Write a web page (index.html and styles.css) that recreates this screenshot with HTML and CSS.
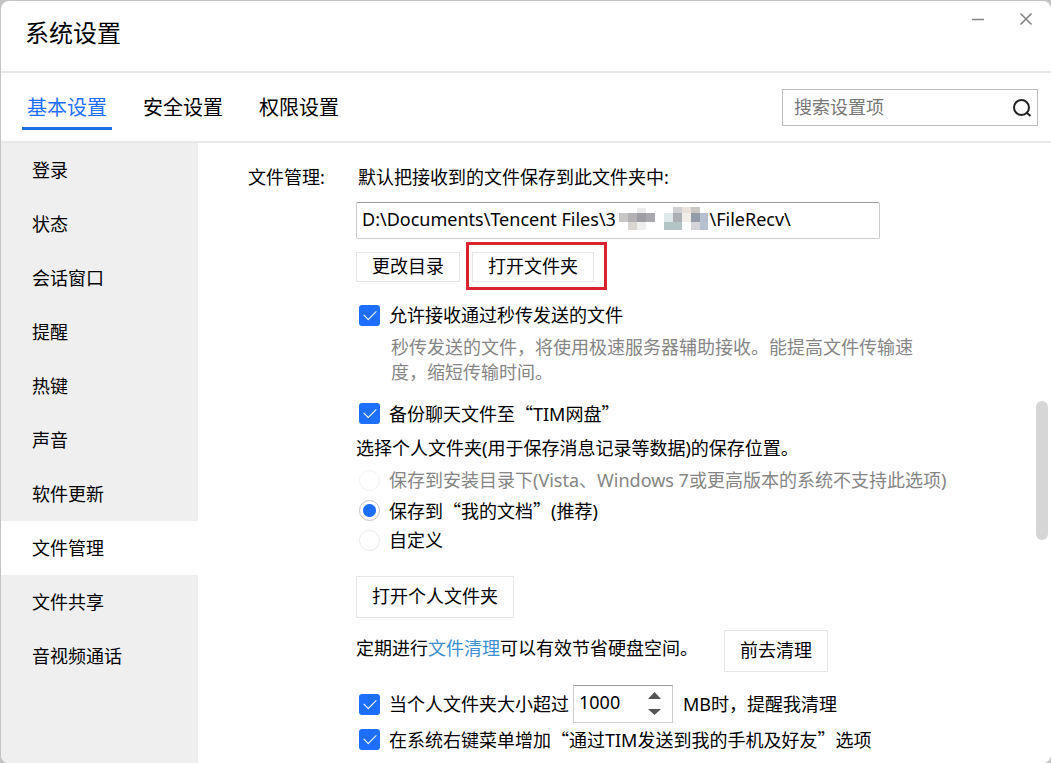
FILE: index.html
```html
<!DOCTYPE html>
<html lang="zh-CN">
<head>
    <meta charset="UTF-8">
    <title>系统设置</title>
    <link rel="stylesheet" href="styles.css">
</head>
<body>
    <div class="window">
        <header class="titlebar">
            <h1>系统设置</h1>
            <div class="window-buttons">
                <button type="button" aria-label="最小化">
                    <svg width="14" height="14" viewBox="0 0 14 14"><path d="M1 7.5h12"/></svg>
                </button>
                <button type="button" aria-label="关闭">
                    <svg width="14" height="14" viewBox="0 0 14 14"><path d="M1.5 1.5l11 11M12.5 1.5l-11 11"/></svg>
                </button>
            </div>
        </header>

        <div class="toolbar">
            <nav class="tabs">
                <a href="#basic" class="active">基本设置</a>
                <a href="#security">安全设置</a>
                <a href="#permission">权限设置</a>
            </nav>
            <div class="search">
                <input type="text" placeholder="搜索设置项" aria-label="搜索设置项">
                <svg width="20" height="20" viewBox="0 0 20 20"><circle cx="9.5" cy="9.5" r="7.5"/><path d="M15 15l3.5 3"/></svg>
            </div>
        </div>

        <div class="main">
            <nav class="sidebar">
                <a href="#login">登录</a>
                <a href="#status">状态</a>
                <a href="#chat">会话窗口</a>
                <a href="#remind">提醒</a>
                <a href="#hotkey">热键</a>
                <a href="#sound">声音</a>
                <a href="#update">软件更新</a>
                <a href="#files" class="active">文件管理</a>
                <a href="#share">文件共享</a>
                <a href="#call">音视频通话</a>
            </nav>

            <section class="content">
                <h2>文件管理:</h2>
                <div class="settings">
                    <label class="path-label" for="path">默认把接收到的文件保存到此文件夹中:</label>
                    <div class="path">
                        <input type="text" id="path" value="D:\Documents\Tencent Files\3&nbsp;&nbsp;&nbsp;&nbsp;&nbsp;&nbsp;&nbsp;&nbsp;&nbsp;&nbsp;&nbsp;&nbsp;&nbsp;&nbsp;&nbsp;&nbsp;&nbsp;&nbsp;&nbsp;&nbsp;\FileRecv\">
                        <!-- hidden account number -->
                        <svg class="mosaic" width="90" height="24" viewBox="0 0 90 24">
                            <path fill="#c9c7c5" d="M0 6h9v9H0z"/>
                            <path fill="#b3b1b3" d="M9 6h9v9H9z"/>
                            <path fill="#9d9da2" d="M18 6h9v9h-9z"/>
                            <path fill="#aaa9ae" d="M27 6h9v9h-9z"/>
                            <path fill="#ececec" d="M18 1h9v5h-9z"/>
                            <path fill="#d9d6d1" d="M9 15h9v8H9z"/>
                            <path fill="#eee" d="M18 15h9v8h-9z"/>
                            <path fill="#dfe9e9" d="M45 6h9v9h-9z"/>
                            <path fill="#b4c4c4" d="M45 15h18v8H45z"/>
                            <path fill="#acafb3" d="M54 6h9v9h-9z"/>
                            <path fill="#d0d0d2" d="M54 0h9v6h-9z"/>
                            <path fill="#e7e1d9" d="M63 0h9v6h-9z"/>
                            <path fill="#f0ede8" d="M63 6h9v9h-9z"/>
                            <path fill="#cbc7c3" d="M72 0h9v6h-9z"/>
                            <path fill="#949ba8" d="M72 6h9v9h-9z"/>
                            <path fill="#d5d5d9" d="M72 15h9v8h-9z"/>
                            <path fill="#b5bfcd" d="M81 6h8v17h-8z"/>
                        </svg>
                    </div>

                    <div class="folder-buttons">
                        <button type="button" class="btn btn-small">更改目录</button>
                        <div class="marked">
                            <button type="button" class="btn btn-small">打开文件夹</button>
                        </div>
                    </div>

                    <div class="option">
                        <input type="checkbox" id="fast" checked>
                        <label for="fast">允许接收通过秒传发送的文件</label>
                    </div>
                    <p class="hint">秒传发送的文件，将使用极速服务器辅助接收。能提高文件传输速度，缩短传输时间。</p>
                    <div class="option">
                        <input type="checkbox" id="backup" checked>
                        <label for="backup">备份聊天文件至<span class="quote">“</span>TIM网盘<span class="quote">”</span></label>
                    </div>

                    <p class="place">选择个人文件夹(用于保存消息记录等数据)的保存位置。</p>
                    <div class="option disabled">
                        <input type="radio" name="place" id="place-install" disabled>
                        <label for="place-install">保存到安装目录下(Vista、Windows 7或更高版本的系统不支持此选项)</label>
                    </div>
                    <div class="option">
                        <input type="radio" name="place" id="place-docs" checked>
                        <label for="place-docs">保存到<span class="quote">“</span>我的文档<span class="quote">”</span>(推荐)</label>
                    </div>
                    <div class="option">
                        <input type="radio" name="place" id="place-custom">
                        <label for="place-custom">自定义</label>
                    </div>

                    <button type="button" class="btn personal">打开个人文件夹</button>

                    <div class="clean">
                        <p>定期进行<a href="#clean">文件清理</a>可以有效节省硬盘空间。</p>
                        <button type="button" class="btn">前去清理</button>
                    </div>

                    <div class="option option-size">
                        <input type="checkbox" id="size" checked>
                        <label for="size">当个人文件夹大小超过</label>
                        <div class="spinner">
                            <input type="number" value="1000" aria-label="文件夹大小">
                            <svg width="13" height="24" viewBox="0 0 13 24"><path d="M0 7l6.5-7L13 7zM0 17h13l-6.5 6z"/></svg>
                        </div>
                        <span>MB时，提醒我清理</span>
                    </div>
                    <div class="option">
                        <input type="checkbox" id="menu" checked>
                        <label for="menu">在系统右键菜单增加<span class="quote">“</span>通过TIM发送到我的手机及好友<span class="quote">”</span>选项</label>
                    </div>
                </div>
                <div class="scroll-thumb"></div>
            </section>
        </div>
    </div>
</body>
</html>
```
FILE: styles.css
```css
* {
    box-sizing: border-box;
}
body {
    margin: 0;
    padding: 1px 0 0 1px;
    height: 100vh;
    overflow: hidden;
    background-color: #c4c4c4;
    color: #000;
    font-family: "Noto Sans", "Noto Sans CJK SC", sans-serif;
    font-size: 18px;
    line-height: 24px;
}
h1, h2, p {
    margin: 0;
    font-weight: normal;
}
a {
    color: inherit;
    text-decoration: none;
}
input, button {
    font: inherit;
    color: inherit;
    margin: 0;
}
.window {
    display: flex;
    flex-direction: column;
    height: 100%;
    background-color: #fff;
    border-radius: 8px;
    overflow: hidden;
}

/* title bar */
.titlebar {
    display: flex;
    flex: none;
    justify-content: space-between;
    height: 72px;
    padding: 0 18px 0 24px;
    border-bottom: 2px solid #e8e8e8;
}
.titlebar h1 {
    font-size: 24px;
    line-height: 64px;
}
.window-buttons {
    display: flex;
    gap: 34px;
    padding-top: 11px;
}
.window-buttons button {
    width: 14px;
    height: 14px;
    padding: 0;
    border: 0;
    background: none;
}
.window-buttons svg {
    display: block;
    fill: none;
    stroke: #858585;
    stroke-width: 1.6;
}

/* tabs and search */
.toolbar {
    display: flex;
    flex: none;
    justify-content: space-between;
    align-items: flex-start;
    height: 70px;
    padding: 16px 13px 0 21px;
    border-bottom: 2px solid #e8e8e8;
}
.tabs {
    display: flex;
    gap: 26px;
    font-size: 20px;
    line-height: 38px;
}
.tabs a {
    padding: 0 5px;
    border-bottom: 3px solid transparent;
}
.tabs a.active {
    color: #1e6fff;
    border-color: #1e6fe6;
}
.search {
    display: flex;
    align-items: center;
    width: 256px;
    height: 37px;
    padding: 0 5px 0 11px;
    border: 1px solid #bbb;
}
.search input {
    flex: 1;
    min-width: 0;
    padding: 0 0 2px;
    border: 0;
    outline: none;
}
.search input::placeholder {
    color: #777;
}
.search svg {
    fill: none;
    stroke: #222;
    stroke-width: 2;
}

/* sidebar */
.main {
    display: flex;
    flex: 1;
    min-height: 0;
}
.sidebar {
    flex: none;
    width: 197px;
    background-color: #efefef;
}
.sidebar a {
    display: block;
    padding-left: 31px;
    line-height: 54px;
}
.sidebar a.active {
    background-color: #fff;
}

/* content */
.content {
    position: relative;
    display: flex;
    flex: 1;
    padding: 22px 50px 0;
}
.content h2 {
    flex: none;
    width: 108px;
    font-size: 18px;
}
.settings {
    flex: 1;
    min-width: 0;
}
.path-label {
    display: block;
    padding-left: 2px;
}
.path {
    position: relative;
    width: 524px;
    margin-top: 13px;
}
.path input {
    display: block;
    width: 100%;
    height: 37px;
    padding: 0 5px 4px;
    border: 1px solid #ccc;
    border-top-color: #999;
    border-radius: 2px;
}
.mosaic {
    position: absolute;
    left: 263px;
    top: 5px;
}
.btn {
    height: 42px;
    padding: 0 15px 2px;
    border: 1px solid #e6e6e6;
    background-color: #fff;
    white-space: nowrap;
}
.btn-small {
    display: block;
    height: 30px;
}
.folder-buttons {
    display: flex;
    gap: 12px;
    margin: 13px 0 18px;
}
.marked {
    position: relative;
}
.marked::after {
    content: "";
    position: absolute;
    top: -10px;
    right: -13px;
    bottom: -8px;
    left: -6px;
    border: 3px solid #d9232e;
    pointer-events: none;
}
.option {
    display: flex;
    align-items: center;
    min-height: 30px;
    padding-left: 3px;
    white-space: nowrap;
}
.option input[type="checkbox"],
.option input[type="radio"] {
    appearance: none;
    flex: none;
    width: 21px;
    height: 21px;
    margin-right: 9px;
}
.option input[type="checkbox"] {
    display: grid;
    place-items: center;
    border-radius: 3px;
    background-color: #1e6fff;
}
.option input[type="checkbox"]::before {
    content: "";
    width: 11px;
    height: 6px;
    margin-top: -4px;
    border: solid #fff;
    border-width: 0 0 1px 1px;
    transform: rotate(-45deg);
}
.option input[type="radio"] {
    border: 1px solid #e8e8e8;
    border-radius: 50%;
}
.option input[type="radio"]:checked {
    border: 1px solid #c4c4c4;
    background: radial-gradient(circle, #1e6fff 6px, #fff 7px);
}
.option input[type="radio"]:disabled {
    border-color: #f2f2f2;
}
.disabled {
    color: #858585;
}
.quote {
    font-family: "Noto Sans CJK SC", sans-serif;
}
.hint {
    width: 560px;
    margin: 5px 0 13px;
    padding-left: 35px;
    color: #858585;
    line-height: 25px;
}
.place {
    margin: 8px 0 5px;
}
.personal {
    display: block;
    margin-top: 21px;
}
.clean {
    display: flex;
    gap: 26px;
    margin-top: 12px;
}
.clean p {
    line-height: 36px;
}
.clean a {
    color: #3c8fd0;
}
.option-size {
    margin: 13px 0 1px;
}
.spinner {
    position: relative;
    width: 100px;
    margin: 0 10px 0 4px;
}
.spinner input {
    display: block;
    width: 100%;
    height: 38px;
    padding: 0 30px 4px 5px;
    border: 1px solid #ccc;
    border-top-color: #999;
    appearance: textfield;
}
.spinner input::-webkit-inner-spin-button {
    appearance: none;
}
.spinner svg {
    position: absolute;
    right: 12px;
    top: 7px;
    fill: #555;
}
.scroll-thumb {
    position: absolute;
    top: 258px;
    right: 3px;
    width: 12px;
    height: 139px;
    border-radius: 6px;
    background-color: #d6d6d6;
}
```
